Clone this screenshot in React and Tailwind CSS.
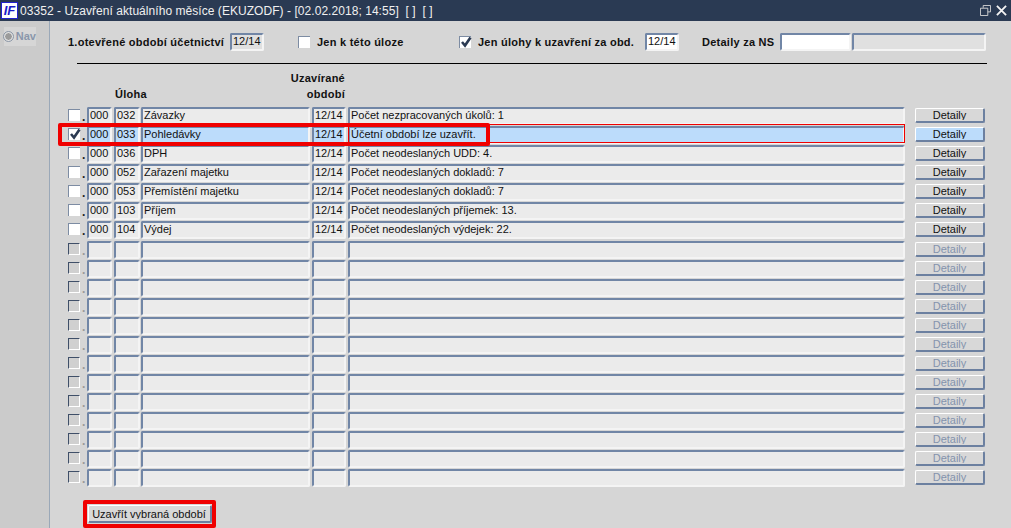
import React from 'react';

const tasks = [
  ['032', 'Závazky', 'Počet nezpracovaných úkolů: 1'],
  ['033', 'Pohledávky', 'Účetní období lze uzavřít.'],
  ['036', 'DPH', 'Počet neodeslaných UDD: 4.'],
  ['052', 'Zařazení majetku', 'Počet neodeslaných dokladů: 7'],
  ['053', 'Přemístění majetku', 'Počet neodeslaných dokladů: 7'],
  ['103', 'Příjem', 'Počet neodeslaných příjemek: 13.'],
  ['104', 'Výdej', 'Počet neodeslaných výdejek: 22.'],
];

const emptyRows = Array.from({ length: 13 }, (_, i) => i);

const fieldBorder = 'border-2 border-t-[#7186a6] border-l-[#7186a6] border-b-[#f4f4f4] border-r-[#f4f4f4] rounded-[2px]';

const Field = ({ className, children }) => (
  <div className={`${fieldBorder} h-[18px] pl-[1px] text-[11px] leading-[12px] text-[#111] whitespace-nowrap overflow-hidden ${className}`}>
    {children}
  </div>
);

const Checkbox = ({ checked, disabled, className = '' }) => (
  <div className={`relative shrink-0 w-[12px] h-[12px] border-t border-l ${disabled ? 'bg-[#d0d0d0] border-[#3f4f68] border-r border-b border-r-white border-b-white' : 'bg-white border-[#7d8ca3]'} ${className}`}>
    {checked && (
      <svg viewBox="0 0 12 12" className="absolute left-[0px] top-[-1px] w-[12px] h-[12px]">
        <path d="M2 6 L5 9.5 L10.5 1.5" fill="none" stroke="#2b3a52" strokeWidth="2.6" />
      </svg>
    )}
  </div>
);

// the label is cut off at the baseline, as on the real form
const ButtonLabel = ({ children }) => (
  <span className="block h-[10px] overflow-hidden leading-[11px]">{children}</span>
);

const DetailButton = ({ active, disabled }) => (
  <button className={`ml-[10px] mt-[1px] w-[70px] h-[15px] border border-t-white border-l-white border-b-2 border-r-2 border-b-[#6c80a0] border-r-[#6c80a0] rounded-[2px] text-[11px] ${active ? 'bg-[#bcdcfb]' : 'bg-[#d8d8d8]'} ${disabled ? 'text-[#8493ad]' : 'text-[#111]'}`}>
    <ButtonLabel>Detaily</ButtonLabel>
  </button>
);

const Row = ({ task, selected, className = '' }) => {
  const bg = selected ? 'bg-[#bcdcfb]' : 'bg-[#ebebeb]';
  return (
    <div className={`flex items-start h-[18px] mb-[1px] ${className}`}>
      <Checkbox checked={selected} disabled={!task} className="mt-[2px]" />
      <span className={`w-[7px] ml-[2px] mt-[3px] text-[12px] leading-[14px] font-bold ${task ? 'text-[#222]' : 'text-[#999]'}`}>.</span>
      <Field className={`w-[25px] ml-[-2px] ${bg}`}>{task && '000'}</Field>
      <Field className={`w-[26px] ml-[2px] ${bg}`}>{task && task[0]}</Field>
      <Field className={`w-[169px] ml-[1px] ${bg}`}>{task && task[1]}</Field>
      <Field className={`w-[34px] ml-[2px] ${bg}`}>{task && '12/14'}</Field>
      <Field className={`w-[557px] ml-[2px] ${bg}`}>{task && task[2]}</Field>
      <DetailButton active={selected} disabled={!task} />
    </div>
  );
};

export default function App() {
  return (
    <div className="relative w-[1011px] h-[528px] overflow-hidden bg-[#d6d6d6] font-['Liberation_Sans',Arial,sans-serif]">
      {/* title bar */}
      <div className="flex items-center h-[21px] bg-[#2a3a53] text-[#f0f0f0]">
        <div className="flex items-center justify-center w-[17px] h-[17px] ml-[1px] bg-white border border-[#2222cc] text-[#1a1ac8] text-[13px] leading-none font-bold italic">
          IF
        </div>
        <span className="ml-[2px] text-[12px] tracking-[0.05px] whitespace-nowrap">
          03352 - Uzavření aktuálního měsíce (EKUZODF) - [02.02.2018; 14:55]&nbsp; [ ]&nbsp; [ ]
        </span>
        <div className="flex items-center ml-auto mr-[4px] gap-[5px]">
          <svg viewBox="0 0 12 12" className="w-[11px] h-[11px]" fill="none" stroke="#d8d8d8">
            <path d="M3.5 3 V0.5 H11.5 V7.5 H8.5 M0.5 3.5 H8.5 V11.5 H0.5 Z" />
          </svg>
          <svg viewBox="0 0 12 12" className="w-[11px] h-[11px]" fill="none" stroke="#f4f4f4" strokeWidth="2">
            <path d="M1 1 L11 11 M11 1 L1 11" />
          </svg>
        </div>
      </div>

      <div className="flex h-[507px]">
        {/* nav side */}
        <div className="w-[50px] shrink-0 bg-[#cbcbcb] border-r border-[#9aa8b8] pt-[6px]">
          <div className="flex items-center w-[32px] h-[19px] ml-[4px] bg-[#d6d6d6]">
            <span className="w-[9px] h-[9px] rounded-full bg-[#9b9b9b] border border-[#f0f0f0] outline outline-[#8b96a6]" />
            <span className="ml-[3px] text-[11px] font-bold text-[#8a97ab]">Nav</span>
          </div>
        </div>

        <div className="flex-1 pl-[18px]">
          {/* filter line */}
          <div className="flex items-center h-[18px] mt-[12px] text-[11px] font-bold tracking-[0.25px] text-[#111] whitespace-nowrap">
            <span className="w-[162px]">1.otevřené období účetnictví</span>
            <Field className="w-[34px] bg-[#e0e0e0] font-normal tracking-normal">12/14</Field>
            <Checkbox className="ml-[34px]" />
            <span className="ml-[7px] w-[142px]">Jen k této úloze</span>
            <Checkbox checked />
            <span className="ml-[7px] w-[167px]">Jen úlohy k uzavření za obd.</span>
            <Field className="w-[34px] bg-white font-normal tracking-normal">12/14</Field>
            <span className="ml-[23px] w-[78px]">Detaily za NS</span>
            <Field className="w-[71px] bg-white" />
            <Field className="w-[134px] ml-[1px] bg-[#e0e0e0]" />
          </div>
          <div className="h-[1px] w-[910px] ml-[9px] mt-[12px] bg-black" />

          {/* column heads */}
          <div className="flex items-end h-[38px] mb-[5px] text-[11px] leading-[16px] font-bold tracking-[0.25px] text-[#111]">
            <span className="ml-[47px] w-[150px]">Úloha</span>
            <span className="w-[80px] text-right whitespace-nowrap">
              Uzavírané
              <br />
              období
            </span>
          </div>

          {tasks.map((t, i) => (
            <Row key={t[0]} task={t} selected={i === 1} />
          ))}
          <div className="h-[1px]" />
          {emptyRows.map((i) => (
            <Row key={i} className={i === 12 ? 'mt-[1px]' : ''} />
          ))}

          <div className="w-[133px] h-[28px] ml-[15px] mt-[13px] border-[4px] border-[#f00000] rounded-[2px] flex items-center justify-center">
            <button className="w-[124px] h-[18px] border border-t-white border-l-white border-b-2 border-r-2 border-b-[#6c80a0] border-r-[#6c80a0] bg-[#d8d8d8] rounded-[2px] text-[11px] text-[#111] whitespace-nowrap">
              <ButtonLabel>Uzavřít vybraná období</ButtonLabel>
            </button>
          </div>
        </div>
      </div>

      {/* red marks drawn over the selected row */}
      <div className="absolute left-[348px] top-[124px] w-[557px] h-[19px] border border-[#f00000]" />
      <div className="absolute left-[58px] top-[123px] w-[432px] h-[23px] border-[4px] border-[#f00000] rounded-[2px]" />
    </div>
  );
}
